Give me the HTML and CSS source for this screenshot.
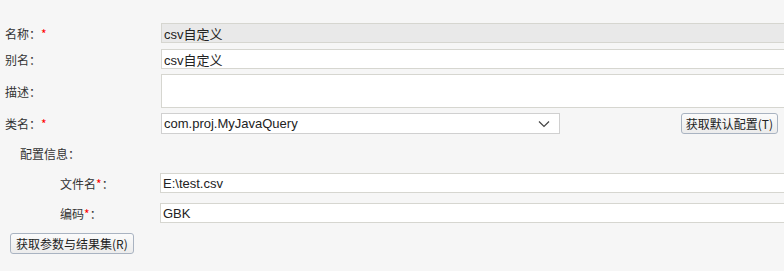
FILE: index.html
```html
<!DOCTYPE html>
<html lang="zh-CN">
<head>
    <meta charset="UTF-8">
    <title>csv自定义</title>
    <link rel="stylesheet" href="styles.css">
</head>
<body>
    <form class="form">
        <div class="row first">
            <label class="label">名称：<span class="req">*</span></label>
            <div class="field"><input class="input readonly" value="csv自定义" readonly></div>
        </div>
        <div class="row">
            <label class="label">别名：</label>
            <div class="field"><input class="input" value="csv自定义"></div>
        </div>
        <div class="row">
            <label class="label">描述：</label>
            <div class="field"><textarea class="input area"></textarea></div>
        </div>
        <div class="row">
            <label class="label">类名：<span class="req">*</span></label>
            <div class="field split">
                <div class="select">
                    <span>com.proj.MyJavaQuery</span>
                    <svg class="chev" width="12" height="8" viewBox="0 0 12 8"><path d="M1 1.5l5 5 5-5" fill="none" stroke="#444" stroke-width="1.2"/></svg>
                </div>
                <button type="button" class="btn">获取默认配置(T)</button>
            </div>
        </div>

        <div class="section-title">配置信息：</div>

        <div class="row sub">
            <label class="label">文件名<span class="req">*</span>：</label>
            <div class="field"><input class="input val" value="E:\test.csv"></div>
        </div>
        <div class="row sub">
            <label class="label">编码<span class="req">*</span>：</label>
            <div class="field"><input class="input val" value="GBK"></div>
        </div>

        <div class="actions">
            <button type="button" class="btn">获取参数与结果集(R)</button>
        </div>
    </form>
</body>
</html>
```

FILE: styles.css
```css
* {
    margin: 0;
    padding: 0;
    box-sizing: border-box;
}

body {
    background: #f6f6f6;
    font-family: "Noto Sans CJK SC", "Liberation Sans", sans-serif;
    font-size: 12px;
    color: #333;
    overflow: hidden;
}

.form {
    padding-top: 23px;
}

.row {
    display: flex;
    align-items: center;
    margin-bottom: 5px;
}

.row.first {
    margin-bottom: 6px;
}

.label {
    width: 161px;
    flex: none;
    padding-left: 5px;
}

.req {
    color: #f00;
}

.field {
    flex: 1;
    min-width: 0;
    overflow: hidden;
}

/* right border falls outside the window, as in the original */
.input {
    display: block;
    width: calc(100% + 2px);
    height: 20px;
    border: 1px solid #d6d6d0;
    background: #fff;
    padding: 0 2px;
    font-family: "Liberation Sans", "Noto Sans CJK SC", sans-serif;
    font-size: 13px;
    color: #222;
    outline: none;
}

.readonly {
    background: #e9e9e9;
}

.area {
    height: 34px;
    resize: none;
}

.split {
    display: flex;
    align-items: center;
    justify-content: space-between;
    padding-right: 6px;
}

.select {
    width: 399px;
    height: 21px;
    border: 1px solid #d0d0d0;
    background: #fff;
    display: flex;
    align-items: center;
    justify-content: space-between;
    padding: 0 9px 0 2px;
    font-family: "Liberation Sans", sans-serif;
    font-size: 13px;
    color: #222;
}

.btn {
    height: 21px;
    padding: 0 5px;
    border: 1px solid #a9b3c1;
    border-radius: 3px;
    background: linear-gradient(#fbfbfb, #ececec);
    font-family: "Noto Sans CJK SC", sans-serif;
    font-size: 12px;
    color: #222;
}

.split .btn {
    padding: 0 4px;
}

.section-title {
    padding: 6px 0 0 20px;
    height: 34px;
}

.sub .label {
    width: 160px;
    padding-left: 60px;
}

.sub {
    margin-bottom: 10px;
}

.actions {
    padding: 0 10px;
    margin-top: 1px;
}
```
